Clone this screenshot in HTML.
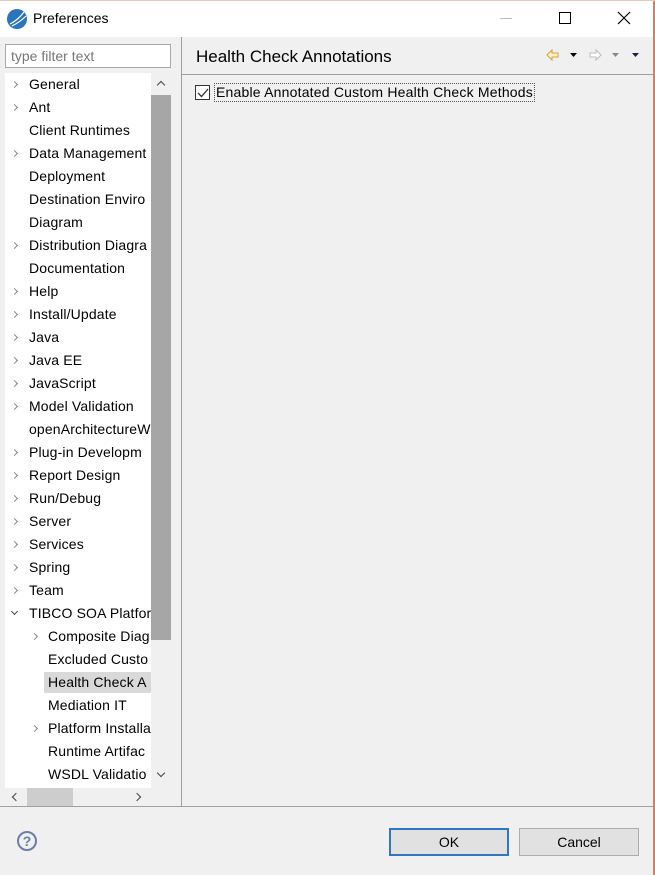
<!DOCTYPE html>
<html><head><style>
*{margin:0;padding:0;box-sizing:border-box}
body{width:655px;height:875px;background:#f0f0f0;font-family:"Liberation Sans",sans-serif;position:relative;overflow:hidden;font-size:14px;color:#000}
.a{position:absolute}
.t{position:absolute;left:29px;white-space:nowrap;line-height:20px;letter-spacing:0.15px}
.c{position:absolute;left:12px;width:5px;height:5px;border-right:1px solid #888;border-bottom:1px solid #888;transform:rotate(-45deg);margin-top:8px}
.d{transform:rotate(45deg);margin-top:6px;border-color:#444}
</style></head><body>
<div class="a" style="left:0;top:0;width:655px;height:37px;background:#fff"></div>
<div class="a" style="left:653px;top:0;width:2px;height:875px;background:#c8826e"></div>
<div class="a" style="left:0;top:0;width:655px;height:1px;background:#e8c8b8"></div>
<svg class="a" style="left:6px;top:8px" width="22" height="22" viewBox="0 0 22 22"><circle cx="11" cy="11" r="10" fill="#2a74c0"/><path d="M4 16 Q12 12 18 4 M6 18 Q14 14 20 8" stroke="#fff" stroke-width="1.2" fill="none"/></svg>
<div class="a" style="left:33px;top:10px;font-size:14px">Preferences</div>
<div class="a" style="left:500px;top:18px;width:12px;height:1px;background:#bbb"></div>
<div class="a" style="left:559px;top:12px;width:12px;height:12px;border:1px solid #000"></div>
<svg class="a" style="left:617px;top:11px" width="14" height="14"><path d="M1 1L13 13M13 1L1 13" stroke="#000" stroke-width="1.2"/></svg>

<div class="a" style="left:5px;top:44px;width:166px;height:24px;background:#fff;border:1px solid #aaa"></div>
<div class="a" style="left:11px;top:48px;color:#777;font-size:14px">type filter text</div>

<div class="a" style="left:5px;top:73px;width:166px;height:733px;background:#fff;overflow:hidden">
<div class="a" style="left:146px;top:0;width:20px;height:715px;background:#f0f0f0"></div>
<div class="a" style="left:146px;top:22px;width:20px;height:545px;background:#a6a6a6"></div>
<div class="a" style="left:153px;top:9px;width:6px;height:6px;border-left:1px solid #444;border-top:1px solid #444;transform:rotate(45deg)"></div>
<div class="a" style="left:153px;top:697px;width:6px;height:6px;border-right:1px solid #444;border-bottom:1px solid #444;transform:rotate(45deg)"></div>
<div class="a" style="left:0;top:715px;width:166px;height:18px;background:#f0f0f0"></div>
<div class="a" style="left:22px;top:715px;width:46px;height:18px;background:#cdcdcd"></div>
<div class="a" style="left:8px;top:721px;width:6px;height:6px;border-left:1px solid #444;border-bottom:1px solid #444;transform:rotate(45deg)"></div>
<div class="a" style="left:129px;top:721px;width:6px;height:6px;border-right:1px solid #444;border-top:1px solid #444;transform:rotate(45deg)"></div>
<div style="position:absolute;left:-5px;top:0">
<div class="c" style="top:1px"></div><div class="t" style="top:1px">General</div>
<div class="c" style="top:24px"></div><div class="t" style="top:24px">Ant</div>
<div class="t" style="top:47px">Client Runtimes</div>
<div class="c" style="top:70px"></div><div class="t" style="top:70px">Data Management</div>
<div class="t" style="top:93px">Deployment</div>
<div class="t" style="top:116px">Destination Enviro</div>
<div class="t" style="top:139px">Diagram</div>
<div class="c" style="top:162px"></div><div class="t" style="top:162px">Distribution Diagra</div>
<div class="t" style="top:185px">Documentation</div>
<div class="c" style="top:208px"></div><div class="t" style="top:208px">Help</div>
<div class="c" style="top:231px"></div><div class="t" style="top:231px">Install/Update</div>
<div class="c" style="top:254px"></div><div class="t" style="top:254px">Java</div>
<div class="c" style="top:277px"></div><div class="t" style="top:277px">Java EE</div>
<div class="c" style="top:300px"></div><div class="t" style="top:300px">JavaScript</div>
<div class="c" style="top:323px"></div><div class="t" style="top:323px">Model Validation</div>
<div class="t" style="top:346px">openArchitectureW</div>
<div class="c" style="top:369px"></div><div class="t" style="top:369px">Plug-in Developm</div>
<div class="c" style="top:392px"></div><div class="t" style="top:392px">Report Design</div>
<div class="c" style="top:415px"></div><div class="t" style="top:415px">Run/Debug</div>
<div class="c" style="top:438px"></div><div class="t" style="top:438px">Server</div>
<div class="c" style="top:461px"></div><div class="t" style="top:461px">Services</div>
<div class="c" style="top:484px"></div><div class="t" style="top:484px">Spring</div>
<div class="c" style="top:507px"></div><div class="t" style="top:507px">Team</div>
<div class="c d" style="top:530px"></div><div class="t" style="top:530px">TIBCO SOA Platfor</div>
<div class="c" style="top:553px;left:32px"></div><div class="t" style="top:553px;left:48px">Composite Diag</div>
<div class="t" style="top:576px;left:48px">Excluded Custo</div>
<div class="a" style="left:44px;top:599px;width:107px;height:21px;background:#d9d9d9"></div>
<div class="t" style="top:599px;left:48px">Health Check A</div>
<div class="t" style="top:622px;left:48px">Mediation IT</div>
<div class="c" style="top:645px;left:32px"></div><div class="t" style="top:645px;left:48px">Platform Installa</div>
<div class="t" style="top:668px;left:48px">Runtime Artifac</div>
<div class="t" style="top:691px;left:48px">WSDL Validatio</div>
</div>
</div>

<div class="a" style="left:181px;top:37px;width:1px;height:770px;background:#a0a0a0"></div>
<div class="a" style="left:0;top:806px;width:653px;height:1px;background:#a0a0a0"></div>
<div class="a" style="left:182px;top:74px;width:471px;height:1px;background:#a0a0a0"></div>
<div class="a" style="left:196px;top:47px;font-size:17px">Health Check Annotations</div>
<svg class="a" style="left:545px;top:47px" width="100" height="16"><path d="M2 8L7 3V6H13V10H7V13Z" fill="#fff6c8" stroke="#d8a030"/><path d="M25 6H32L28.5 10Z" fill="#000"/><path d="M56 8L51 3V6H45V10H51V13Z" fill="#fff" stroke="#bbb"/><path d="M67 6H74L70.5 10Z" fill="#888"/><path d="M87 6H94L90.5 10Z" fill="#202050"/></svg>
<div class="a" style="left:195px;top:85px;width:15px;height:15px;background:#fff;border:1px solid #333"></div>
<svg class="a" style="left:197px;top:87px" width="12" height="12"><path d="M1 6L4.5 9.5L11 2" stroke="#333" stroke-width="1.3" fill="none"/></svg>
<div class="a" style="left:214px;top:83px;font-size:14px;border:1px dotted #555;padding:0 1px;line-height:17px;letter-spacing:0.2px">Enable Annotated Custom Health Check Methods</div>

<div class="a" style="left:17px;top:831px;width:20px;height:20px;border:2px solid #6a7fa8;border-radius:50%;color:#6a7fa8;font-size:14px;font-weight:bold;text-align:center;line-height:17px">?</div>
<div class="a" style="left:389px;top:828px;width:120px;height:28px;background:#e1e1e1;border:2px solid #2f78c0;text-align:center;line-height:24px">OK</div>
<div class="a" style="left:519px;top:828px;width:120px;height:28px;background:#e1e1e1;border:1px solid #adadad;text-align:center;line-height:26px">Cancel</div>
</body></html>
